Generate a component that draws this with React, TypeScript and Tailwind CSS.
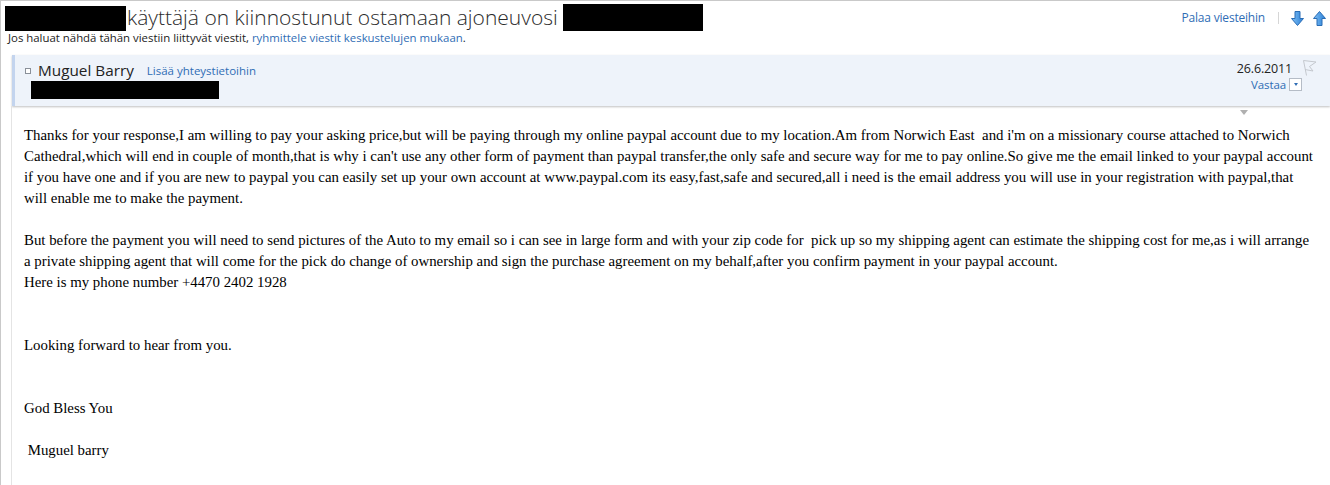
import React from "react";

const Redacted = ({ className }: { className: string }) => <div className={`bg-black ${className}`} />;

const ArrowDown = () => (
  <svg width="13" height="15" viewBox="0 0 13 15">
    <defs>
      <linearGradient id="ad" x1="0" y1="0" x2="1" y2="0">
        <stop offset="0" stopColor="#7fc0f5" />
        <stop offset="1" stopColor="#2b7fd6" />
      </linearGradient>
    </defs>
    <path d="M4 0.5 H9 V7.5 H12.5 L6.5 14.5 L0.5 7.5 H4 Z" fill="url(#ad)" stroke="#2a6db5" strokeWidth="1" strokeLinejoin="round" />
  </svg>
);

const ArrowUp = () => (
  <svg width="13" height="15" viewBox="0 0 13 15">
    <defs>
      <linearGradient id="au" x1="0" y1="0" x2="1" y2="0">
        <stop offset="0" stopColor="#7fc0f5" />
        <stop offset="1" stopColor="#2b7fd6" />
      </linearGradient>
    </defs>
    <path d="M4 14.5 H9 V7.5 H12.5 L6.5 0.5 L0.5 7.5 H4 Z" fill="url(#au)" stroke="#2a6db5" strokeWidth="1" strokeLinejoin="round" />
  </svg>
);

const Flag = () => (
  <svg width="15" height="16" viewBox="0 0 15 16" fill="none" stroke="#c4c8ce" strokeWidth="1">
    <path d="M1.5 0.5 L4.5 15.5" />
    <path d="M1.5 0.5 L14 2 L7.5 6.5 L11 11 L3 9.5" strokeLinejoin="round" />
  </svg>
);

const bodyLines: string[][] = [
  [
    "Thanks for your response,I am willing to pay your asking price,but will be paying through my online paypal account due to my location.Am from Norwich East  and i'm on a missionary course attached to Norwich",
    "Cathedral,which will end in couple of month,that is why i can't use any other form of payment than paypal transfer,the only safe and secure way for me to pay online.So give me the email linked to your paypal account",
    "if you have one and if you are new to paypal you can easily set up your own account at www.paypal.com its easy,fast,safe and secured,all i need is the email address you will use in your registration with paypal,that",
    "will enable me to make the payment.",
  ],
  [
    "But before the payment you will need to send pictures of the Auto to my email so i can see in large form and with your zip code for  pick up so my shipping agent can estimate the shipping cost for me,as i will arrange",
    "a private shipping agent that will come for the pick do change of ownership and sign the purchase agreement on my behalf,after you confirm payment in your paypal account.",
    "Here is my phone number +4470 2402 1928",
  ],
];

export default function App() {
  return (
    <div className="h-[485px] w-[1330px] overflow-hidden border-l border-t border-[#c9c9c9] bg-white font-['Open_Sans',sans-serif] text-[#333]">
      {/* Title row */}
      <div className="flex items-start justify-between">
        <div className="pl-[4px]">
          <div className="flex h-[30px] items-end">
            <Redacted className="h-[25px] w-[121px]" />
            <span className="ml-[1px] mb-[1px] text-[21px] font-light leading-[26px] text-[#2b2b2b]">
              käyttäjä on kiinnostunut ostamaan ajoneuvosi
            </span>
            <Redacted className="ml-[5px] h-[27px] w-[140px]" />
          </div>
          <p className="pl-[3px] text-[11.4px] leading-[14px] text-[#222]">
            Jos haluat nähdä tähän viestiin liittyvät viestit,{" "}
            <span className="text-[#2f6db5]">ryhmittele viestit keskustelujen mukaan</span>.
          </p>
        </div>
        <div className="flex items-center pr-[4px] pt-[9px]">
          <span className="text-[12px] leading-[16px] tracking-[-0.2px] text-[#2f6db5]">Palaa viesteihin</span>
          <span className="ml-[13px] h-[12px] w-px bg-[#d6d6d6]" />
          <span className="ml-[12px] flex">
            <ArrowDown />
          </span>
          <span className="ml-[9px] flex">
            <ArrowUp />
          </span>
        </div>
      </div>

      {/* Message header */}
      <div className="mt-[10px] ml-[11px] flex h-[51px] justify-between border-l-[3px] border-[#c3d4ee] bg-[#eef3fa] shadow-[0_1px_2px_rgba(0,0,0,0.25)]">
        <div className="pl-[10px] pt-[6px]">
          <div className="flex items-center">
            <span className="mt-[2px] h-[6px] w-[6px] border border-[#8a9099] bg-white" />
            <span className="ml-[7px] text-[15.3px] leading-[18px] text-[#222]">Muguel Barry</span>
            <span className="ml-[13px] mt-[1px] text-[11.5px] text-[#2f6db5]">Lisää yhteystietoihin</span>
          </div>
          <Redacted className="ml-[6px] mt-[2px] h-[18px] w-[188px]" />
        </div>
        <div className="flex flex-col items-end pr-[13px] pt-[5px]">
          <div className="flex items-start">
            <span className="mt-[1px] text-[12.5px] leading-[16px] tracking-[-0.15px] text-[#222]">26.6.2011</span>
            <span className="ml-[10px]">
              <Flag />
            </span>
          </div>
          <div className="mr-[15px] flex items-center">
            <span className="text-[11.5px] leading-[15px] tracking-[-0.1px] text-[#2f6db5]">Vastaa</span>
            <span className="ml-[3px] flex h-[13px] w-[13px] items-center justify-center border border-[#b5bcc6] bg-white">
              <span className="h-0 w-0 border-x-[2.5px] border-t-[3px] border-x-transparent border-t-[#2f6db5]" />
            </span>
          </div>
        </div>
      </div>

      {/* Body */}
      <div className="ml-[10px] h-full border-l border-[#e4e4e4]">
        <div className="flex justify-end pr-[82px] pt-[4px]">
          <span className="h-0 w-0 border-x-[4px] border-t-[5px] border-x-transparent border-t-[#b0b0b0]" />
        </div>
        <div className="pl-[12px] pt-[10px] font-['Liberation_Serif',serif] text-[14.85px] leading-[21px] text-black whitespace-pre">
          {bodyLines.map((para, i) => (
            <p key={i} className={i > 0 ? "mt-[21px]" : ""}>
              {para.map((line, j) => (
                <span key={j} className="block">
                  {line}
                </span>
              ))}
            </p>
          ))}
          <p className="mt-[42px]">Looking forward to hear from you.</p>
          <p className="mt-[42px]">God Bless You</p>
          <p className="mt-[21px]"> Muguel barry</p>
        </div>
      </div>
    </div>
  );
}
